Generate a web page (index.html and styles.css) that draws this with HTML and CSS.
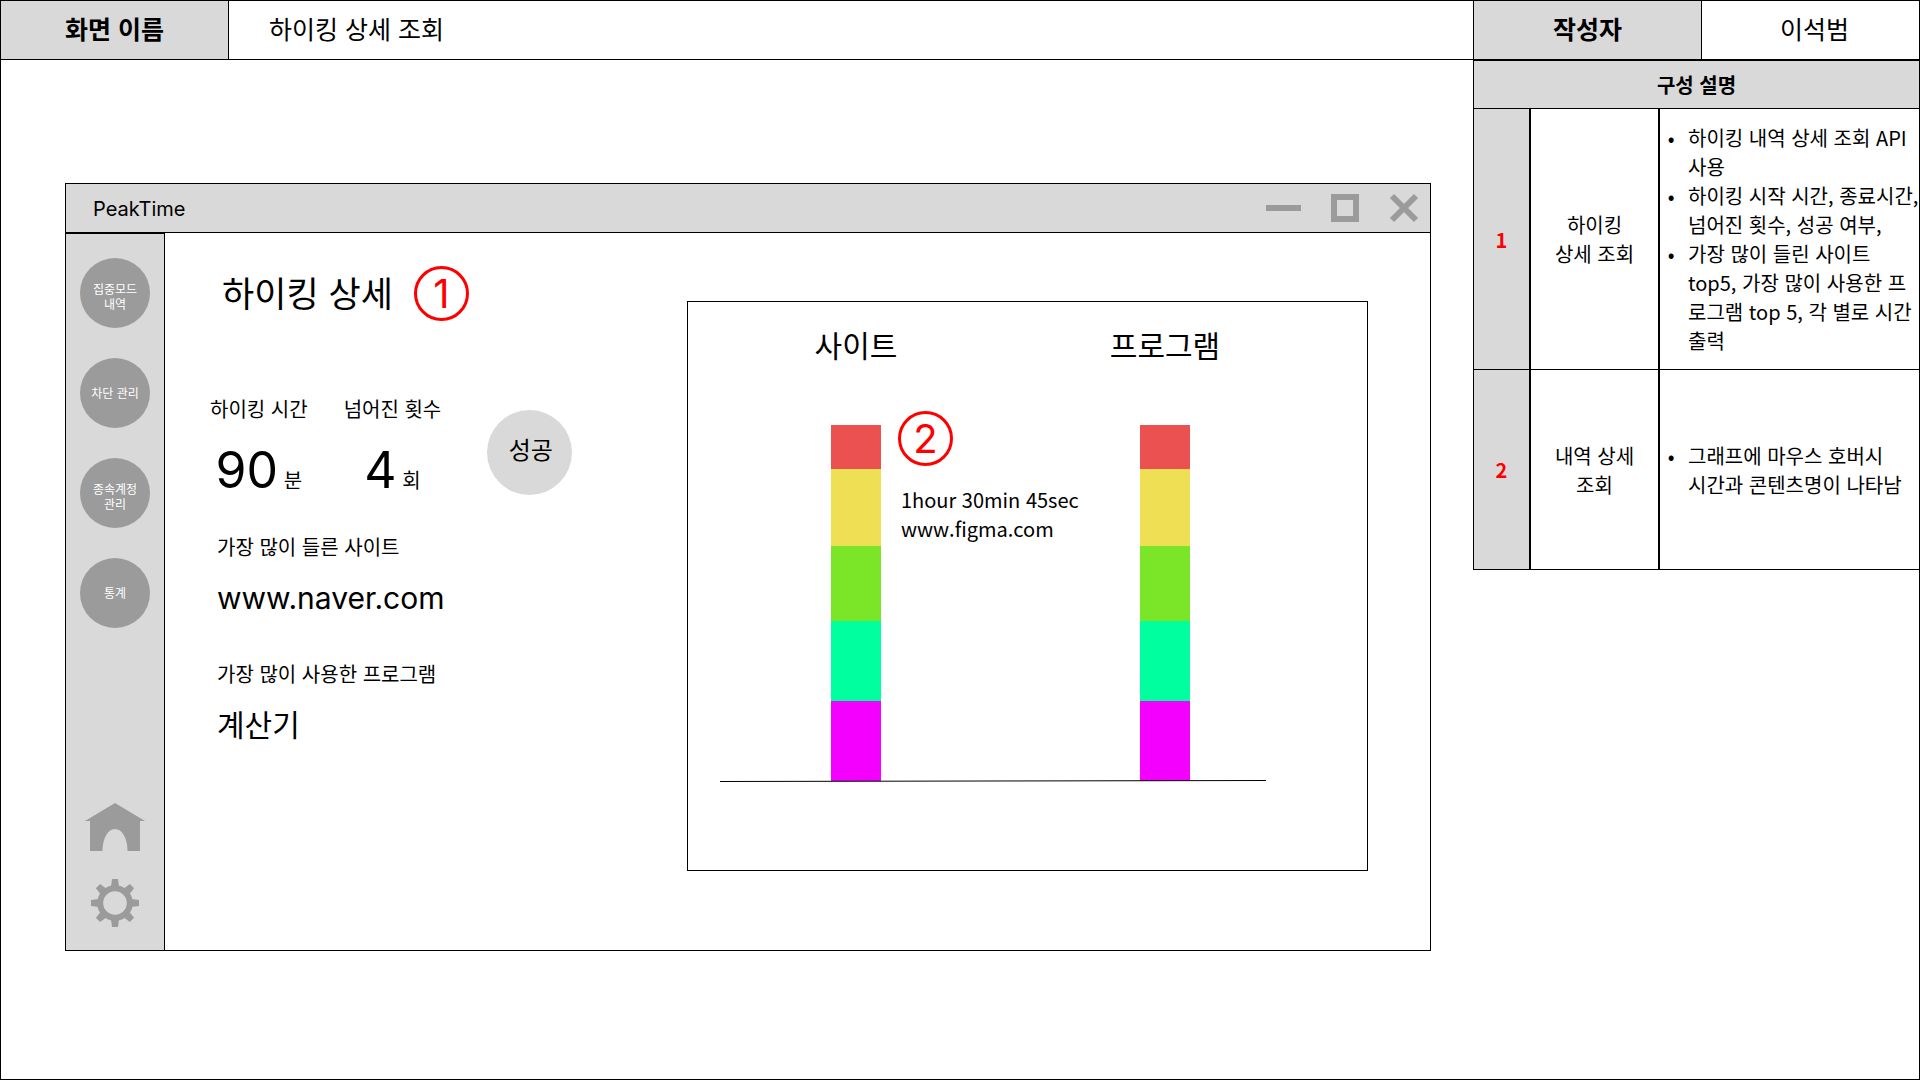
FILE: index.html
```html
<!DOCTYPE html>
<html lang="ko">
<head>
<meta charset="utf-8">
<meta name="viewport" content="width=device-width, initial-scale=1">
<title>하이킹 상세 조회</title>
<link rel="stylesheet" href="styles.css">
</head>
<body>
<div class="page">
  <header class="sheet-header">
    <div class="sheet-label">화면 이름</div>
    <h1 class="sheet-title">하이킹 상세 조회</h1>
    <div class="sheet-author">
      <div class="sheet-label">작성자</div>
      <div class="author-name">이석범</div>
    </div>
  </header>

  <div class="sheet-body">
    <main class="stage">
      <section class="window">
        <div class="titlebar">
          <span class="app-name">PeakTime</span>
          <div class="window-controls">
            <button type="button" aria-label="최소화"><svg width="35" height="30" viewBox="0 0 35 30"><path d="M0 12h35v6H0z" fill="#9b9b9b"/></svg></button>
            <button type="button" aria-label="최대화"><svg width="28" height="30" viewBox="0 0 28 30"><path d="M3 4h22v22H3z" fill="none" stroke="#9b9b9b" stroke-width="6"/></svg></button>
            <button type="button" aria-label="닫기"><svg width="30" height="30" viewBox="0 0 30 30"><path d="M3 3l24 24M27 3L3 27" fill="none" stroke="#9b9b9b" stroke-width="6"/></svg></button>
          </div>
        </div>

        <div class="window-body">
          <nav class="sidebar">
            <button type="button" class="nav-item two-line">집중모드<br>내역</button>
            <button type="button" class="nav-item">차단 관리</button>
            <button type="button" class="nav-item two-line">종속계정<br>관리</button>
            <button type="button" class="nav-item">통계</button>
            <div class="nav-icons">
              <button type="button" aria-label="홈"><svg width="60" height="48" viewBox="0 0 60 48"><path d="M30 0L60 18H55V48H42.500C42.500 35 37 26 30 26S17.500 35 17.500 48H5V18H0z" fill="#9b9b9b"/></svg></button>
              <button type="button" aria-label="설정"><svg width="48" height="48" viewBox="-24 -24 48 48">
                <defs><path id="tooth" d="M-3-24H3L4-16H-4z"/></defs>
                <circle r="14.800" fill="none" stroke="#9b9b9b" stroke-width="6"/>
                <g fill="#9b9b9b">
                  <use href="#tooth"/><use href="#tooth" transform="rotate(45)"/><use href="#tooth" transform="rotate(90)"/><use href="#tooth" transform="rotate(135)"/>
                  <use href="#tooth" transform="rotate(180)"/><use href="#tooth" transform="rotate(225)"/><use href="#tooth" transform="rotate(270)"/><use href="#tooth" transform="rotate(315)"/>
                </g>
              </svg></button>
            </div>
          </nav>

          <div class="content">
            <section class="detail">
              <div class="detail-head">
                <h2>하이킹 상세</h2>
                <span class="marker">1</span>
              </div>
              <div class="stats">
                <div class="stat">
                  <div class="label">하이킹 시간</div>
                  <div class="figure"><b>90</b> 분</div>
                </div>
                <div class="stat">
                  <div class="label">넘어진 횟수</div>
                  <div class="figure"><b>4</b> 회</div>
                </div>
                <div class="result">성공</div>
              </div>
              <dl class="tops">
                <dt class="label">가장 많이 들른 사이트</dt>
                <dd>www.naver.com</dd>
                <dt class="label">가장 많이 사용한 프로그램</dt>
                <dd>계산기</dd>
              </dl>
            </section>

            <section class="chart">
              <div class="plot">
                <div class="series">
                  <h3>사이트</h3>
                  <div class="bar">
                    <div class="seg red" style="height:44px"></div>
                    <div class="seg yellow" style="height:77px"></div>
                    <div class="seg green" style="height:75px"></div>
                    <div class="seg mint" style="height:80px"></div>
                    <div class="seg magenta" style="height:80px"></div>
                    <div class="hover-info">
                      <span class="marker">2</span>
                      <p>1hour 30min 45sec<br>www.figma.com</p>
                    </div>
                  </div>
                </div>
                <div class="series">
                  <h3>프로그램</h3>
                  <div class="bar">
                    <div class="seg red" style="height:44px"></div>
                    <div class="seg yellow" style="height:77px"></div>
                    <div class="seg green" style="height:75px"></div>
                    <div class="seg mint" style="height:80px"></div>
                    <div class="seg magenta" style="height:80px"></div>
                  </div>
                </div>
              </div>
              <svg class="axis" viewBox="0 0 546 2" preserveAspectRatio="none"><path d="M0 1.500L546 .5" stroke="#000" fill="none"/></svg>
            </section>
          </div>
        </div>
      </section>
    </main>

    <aside class="spec">
      <table>
        <colgroup><col class="col-num"><col class="col-name"><col></colgroup>
        <thead><tr><th colspan="3" scope="colgroup">구성 설명</th></tr></thead>
        <tbody>
          <tr>
            <th scope="row" class="num">1</th>
            <td class="name">하이킹<br>상세 조회</td>
            <td class="desc">
              <ul>
                <li>하이킹 내역 상세 조회 API<br>사용</li>
                <li>하이킹 시작 시간, 종료시간,<br>넘어진 횟수, 성공 여부,</li>
                <li>가장 많이 들린 사이트<br>top5, 가장 많이 사용한 프<br>로그램 top 5, 각 별로 시간<br>출력</li>
              </ul>
            </td>
          </tr>
          <tr>
            <th scope="row" class="num">2</th>
            <td class="name">내역 상세<br>조회</td>
            <td class="desc">
              <ul>
                <li>그래프에 마우스 호버시<br>시간과 콘텐츠명이 나타남</li>
              </ul>
            </td>
          </tr>
        </tbody>
      </table>
    </aside>
  </div>
</div>
</body>
</html>
```
FILE: styles.css
```css
* {
  box-sizing: border-box;
}

body {
  margin: 0;
  background: #fff;
  color: #000;
  font: 20px/29px "Noto Sans CJK KR", sans-serif;
}

h1, h2, h3, p, dl, dd, ul {
  margin: 0;
  padding: 0;
  font-weight: 400;
}

button {
  padding: 0;
  border: 0;
  background: none;
  font: inherit;
  color: inherit;
  cursor: pointer;
}

svg {
  display: block;
}

.page {
  display: flex;
  flex-direction: column;
  min-height: 100vh;
  border: 1px solid #000;
}

/* Sheet header */
.sheet-header {
  display: flex;
  height: 59px;
  border-bottom: 1px solid #000;
  font-size: 25px;
  line-height: 54px;
}

.sheet-label {
  flex: 0 0 228px;
  border-right: 1px solid #000;
  background: #d9d9d9;
  font-weight: 700;
  text-align: center;
}

.sheet-title {
  flex: 1;
  padding-left: 40px;
  font-size: 25px;
}

.sheet-author {
  display: flex;
  flex: 0 0 446px;
  border-left: 1px solid #000;
}

.author-name {
  flex: 1;
  padding-left: 8px;
  text-align: center;
}

.sheet-body {
  display: flex;
  flex: 1;
  align-items: flex-start;
}

.stage {
  flex: 1;
  padding: 123px 42px 64px 64px;
}

/* App window */
.window {
  border: 1px solid #000;
  font-family: Inter, "Noto Sans CJK KR", sans-serif;
}

.titlebar {
  display: flex;
  align-items: center;
  justify-content: space-between;
  height: 49px;
  padding: 0 11px 0 27px;
  border-bottom: 1px solid #000;
  background: #d9d9d9;
}

.app-name {
  padding-top: 2px;
}

.window-controls {
  display: flex;
  gap: 30px;
}

.window-body {
  display: flex;
}

.sidebar {
  display: flex;
  flex: 0 0 99px;
  flex-direction: column;
  align-items: center;
  gap: 30px;
  padding: 24px 0 23px;
  border: solid #000;
  border-width: 1px 1px 0 0;
  background: #d9d9d9;
}

.nav-item {
  width: 70px;
  height: 70px;
  border-radius: 50%;
  background: #9b9b9b;
  color: #fff;
  font-size: 12px;
  line-height: 15px;
}

.two-line {
  padding-top: 8px;
}

.nav-icons {
  display: flex;
  flex-direction: column;
  align-items: center;
  gap: 28px;
  margin-top: auto;
}

.content {
  display: flex;
  flex: 1;
  padding: 0 62px 79px 45px;
}

/* Hiking detail */
.detail {
  flex: 0 0 477px;
  padding-top: 33px;
}

.detail-head {
  display: flex;
  align-items: center;
  gap: 21px;
  padding-left: 12px;
}

.detail-head h2 {
  font-size: 35px;
  line-height: 44px;
}

.marker {
  display: block;
  width: 55px;
  height: 55px;
  border: 3px solid #f00;
  border-radius: 50%;
  color: #f00;
  font: 40px/49px Inter, sans-serif;
  text-align: center;
}

.label {
  line-height: 30px;
}

.stats {
  display: flex;
  align-items: flex-start;
  gap: 36px;
  margin-top: 74px;
}

.stat {
  text-align: center;
}

.figure {
  height: 60px;
  margin-top: 15px;
  line-height: 60px;
}

.figure b {
  font-size: 50px;
  font-weight: 400;
}

.result {
  width: 85px;
  height: 85px;
  margin: 15px 0 0 10px;
  padding-left: 2px;
  border-radius: 50%;
  background: #d9d9d9;
  font-size: 24px;
  line-height: 82px;
  text-align: center;
}

.tops {
  margin-top: 33px;
  padding-left: 7px;
}

.tops dd {
  margin: 15px 0 42px;
  font-size: 30px;
  line-height: 40px;
}

.tops dd:last-child {
  margin-bottom: 0;
}

/* Chart */
.chart {
  flex: 1;
  margin-top: 68px;
  padding: 22px 101px 88px 32px;
  border: 1px solid #000;
}

.plot {
  display: flex;
  justify-content: space-between;
  padding: 0 36px 0 71px;
}

.series {
  width: 130px;
}

.series h3 {
  font-size: 30px;
  line-height: 44px;
  text-align: center;
}

.bar {
  position: relative;
  width: 50px;
  margin: 57px auto 0;
}

.red { background: #eb5151; }
.yellow { background: #eedf54; }
.green { background: #7be528; }
.mint { background: #00ff9f; }
.magenta { background: #f300ff; }

.hover-info {
  position: absolute;
  top: -14px;
  left: 67px;
  white-space: nowrap;
  font-family: "Noto Sans CJK KR", sans-serif;
}

.hover-info p {
  margin: 19px 0 0 3px;
}

.axis {
  position: relative;
  width: 100%;
  height: 2px;
  margin-top: -1px;
}

/* Spec table */
.spec {
  flex: 0 0 446px;
}

.spec table {
  width: 100%;
  border: solid #000;
  border-width: 1px 0 0 1px;
  border-spacing: 0;
  table-layout: fixed;
}

.col-num {
  width: 56px;
}

.col-name {
  width: 129px;
}

.spec th,
.spec td {
  padding: 0;
  border-bottom: 1px solid #000;
}

.spec thead th {
  height: 48px;
  background: #d9d9d9;
}

.spec tbody tr {
  height: 200px;
}

.spec tbody tr:first-child {
  height: 261px;
}

.spec .num {
  border-right: 1px solid #000;
  background: #d9d9d9;
  color: #f00;
}

.spec .name {
  border: solid #000;
  border-width: 0 1px 1px;
  text-align: center;
}

.spec .desc {
  overflow: hidden;
  border-left: 1px solid #000;
  white-space: nowrap;
}

.desc ul {
  padding-left: 28px;
  list-style-type: "•\00a0\00a0\00a0";
}
```
